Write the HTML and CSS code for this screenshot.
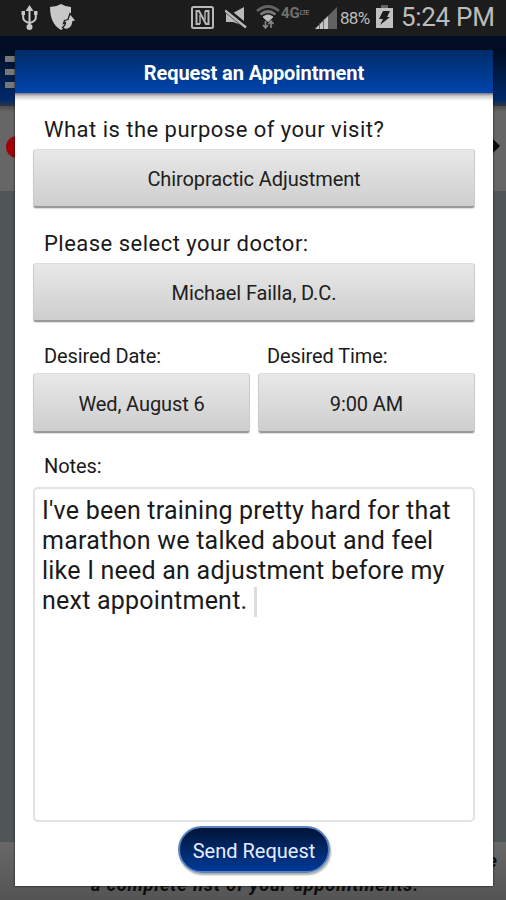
FILE: index.html
```html
<!DOCTYPE html>
<html lang="en">
<head>
  <meta charset="UTF-8">
  <meta name="viewport" content="width=device-width, initial-scale=1.0">
  <title>Request an Appointment</title>
  <link rel="stylesheet" href="styles.css">
</head>
<body>
  <header class="status-bar">
    <div class="status-left">
      <svg class="usb" width="17" height="26" viewBox="0 0 17 26" fill="none" stroke="#c8c8c8" stroke-width="2">
        <path d="M8.5 4v18M2.200 9v4q0 3 6 5M14.800 9v4q0 3-6 5"/>
        <path d="M8.5 0l4 6h-8zM5.500 22a3 3 0 1 0 6 0a3 3 0 1 0-6 0M.5 6h3.500v4H.5zM13 6h3.500v4H13z" fill="#c8c8c8" stroke="none"/>
      </svg>
      <svg class="shield" width="27" height="27" viewBox="0 0 27 27">
        <path d="M0 3q6 0 11-3q5 3 10 3v11l-3 8-7 4Q0 20 0 3z" fill="#c8c8c8"/>
        <path d="M20 9.500l6.500 7.500-3.500.5q-1 8-8 8l-2.500-2q3-2 3-5l-2 1 1-3 3.500-1z" fill="#c8c8c8" stroke="#1c1c1c" stroke-width="1.300"/>
      </svg>
    </div>
    <div class="status-right">
      <svg class="nfc" width="23" height="23" viewBox="0 0 23 23" fill="none" stroke="#b9b9b9">
        <rect x="1" y="1" width="21" height="21" rx="1.500" stroke-width="2"/>
        <path d="M9 18H5.500V5H8l7 13h2.500V5H14" stroke-width="2"/>
        <path d="M9 18V9M14 5v9" stroke-width="1.400"/>
      </svg>
      <svg class="mute" width="23" height="23" viewBox="0 0 23 23">
        <path d="M1 6h7l11-6v19L8 15H1z" fill="#b9b9b9"/>
        <path d="M0 2l22 18" stroke="#1c1c1c" stroke-width="5.500"/>
        <path d="M0 3.500l21 17" stroke="#b9b9b9" stroke-width="2.500"/>
      </svg>
      <svg class="wifi" width="24" height="24" viewBox="0 0 24 24" fill="none" stroke-width="2.800">
        <path d="M1 6q11-9 22 0" stroke="#636363"/>
        <path d="M4.500 9.500q7.500-6 15 0" stroke="#777"/>
        <path d="M7 12q5-4 10 0l-5 4.500z" fill="#c0c0c0" stroke="#c0c0c0" stroke-width="1"/>
        <path d="M9.500 16v7M15 23v-7M7 20l2.500 3 2.500-3M12.500 19l2.500-3 2.500 3" stroke="#888" stroke-width="1.600"/>
      </svg>
      <span class="network">4G<small>LTE</small></span>
      <svg class="signal" width="22" height="22" viewBox="0 0 22 22">
        <path d="M0 22L22 0v22z" fill="#626262"/>
        <path d="M0 22L13 9v13z" fill="#c4c4c4"/>
        <path d="M4.500 22v-6M8.500 22V12" stroke="#555" stroke-width=".8"/>
      </svg>
      <span class="percent">88%</span>
      <svg class="battery" width="17" height="23" viewBox="0 0 17 23">
        <path d="M5 0h7v3H5z" fill="#666"/>
        <path d="M0 3h17v20H0z" fill="#c0c0c0"/>
        <path d="M7 6h7l-3 6h3L4 20l3-6H3z" fill="#1c1c1c"/>
      </svg>
      <span class="clock">5:24 PM</span>
    </div>
  </header>

  <!-- dimmed app screen behind the dialog -->
  <div class="app">
    <div class="app-header">
      <span class="menu-line"></span>
      <span class="menu-line"></span>
      <span class="menu-line"></span>
    </div>
    <div class="app-steps">
      <span class="dot"></span>
      <span class="arrow"></span>
    </div>
    <div class="app-content"></div>
    <div class="app-footer">
      <p class="footer-end">e</p>
      <p class="footer-text">a complete list of your appointments.</p>
    </div>
  </div>

  <main class="dialog">
    <h1>Request an Appointment</h1>
    <form class="request-form">
      <label class="question">What is the purpose of your visit?</label>
      <button type="button" class="picker">Chiropractic Adjustment</button>
      <label class="question doctor">Please select your doctor:</label>
      <button type="button" class="picker">Michael Failla, D.C.</button>
      <div class="row">
        <div class="field">
          <label>Desired Date:</label>
          <button type="button" class="picker">Wed, August 6</button>
        </div>
        <div class="field time">
          <label>Desired Time:</label>
          <button type="button" class="picker">9:00 AM</button>
        </div>
      </div>
      <label class="notes-label">Notes:</label>
      <div class="notes">I've been training pretty hard for that<br>marathon we talked about and feel<br>like I need an adjustment before my<br>next appointment. <span class="cursor"></span></div>
      <button type="button" class="send">Send Request</button>
    </form>
  </main>
</body>
</html>
```

FILE: styles.css
```css
* {
  box-sizing: border-box;
}
body {
  font-family: Roboto, "Liberation Sans", sans-serif;
  margin: 0;
  height: 900px;
  overflow: hidden;
  position: relative;
  display: flex;
  flex-direction: column;
  white-space: nowrap;
}
h1, p {
  margin: 0;
}
.status-bar {
  background: #1c1c1c;
  height: 36px;
  flex: none;
  display: flex;
  justify-content: space-between;
  padding: 0 11px 0 21px;
  color: #bcbcbc;
}
.status-left, .status-right {
  display: flex;
  align-items: flex-start;
}
svg {
  display: block;
  flex: none;
}
.usb {
  margin-top: 5px;
}
.shield {
  margin: 4px 0 0 12px;
}
.nfc {
  margin-top: 6px;
}
.mute {
  margin: 7px 0 0 11px;
}
.wifi {
  margin: 5px 0 0 8px;
}
.network {
  font-size: 15px;
  font-weight: bold;
  line-height: 16px;
  margin: 5px 0 0 1px;
  color: #707070;
  width: 32px;
}
.network small {
  font-size: 7px;
  font-style: italic;
  letter-spacing: -0.8px;
  vertical-align: 3px;
}
.signal {
  margin: 7px 0 0 2px;
}
.percent {
  font-size: 17px;
  line-height: 36px;
  margin-left: 3px;
  width: 32px;
  letter-spacing: -0.7px;
}
.battery {
  margin: 5px 0 0 4px;
}
.clock {
  font-size: 26px;
  line-height: 35px;
  margin-left: 8px;
  width: 94px;
  letter-spacing: -0.3px;
}
.app {
  flex: 1;
  display: flex;
  flex-direction: column;
}
.app-header {
  height: 70px;
  background: linear-gradient(#000d24 15px, #002a6b 64px, #303641);
  padding: 20px 0 0 5px;
  display: flex;
  flex-direction: column;
  gap: 7px;
}
.menu-line {
  width: 22px;
  height: 6px;
  background: #777;
}
.app-steps {
  height: 85px;
  background: linear-gradient(#4c4c4c, #666 6px);
  display: flex;
  justify-content: space-between;
  padding: 30px 6px 0 6px;
}
.dot {
  width: 22px;
  height: 22px;
  border-radius: 50%;
  background: #a00008;
}
.arrow {
  height: 20px;
  border-left: 10px solid #0a0a0a;
  border-top: 10px solid transparent;
  border-bottom: 10px solid transparent;
}
.app-content {
  flex: 1;
  background: #505558;
}
.app-footer {
  height: 58px;
  background: linear-gradient(#686868, #545454);
  font-weight: bold;
  font-style: italic;
  color: #0c0c0c;
  font-size: 18px;
  line-height: 24px;
  padding: 7px 9px 0 11px;
}
.footer-end {
  text-align: right;
}
.footer-text {
  margin-left: 80px;
  letter-spacing: 0.95px;
}
.dialog {
  position: absolute;
  left: 15px;
  top: 50px;
  width: 478px;
  height: 836px;
  background: #fff;
  box-shadow: 0 0 2px #111;
}
.dialog h1 {
  height: 43px;
  background: linear-gradient(#002b68, #0045ae);
  color: #fff;
  font-size: 20px;
  letter-spacing: -0.08px;
  line-height: 46px;
  text-align: center;
}
.request-form {
  display: flex;
  flex-direction: column;
  padding: 22px 18px 0;
  background: linear-gradient(#777, #ccc 3px, #fff 8px);
}
label {
  color: #1a1a1a;
  padding-left: 11px;
  font-size: 20px;
  letter-spacing: -0.1px;
  line-height: 24px;
}
.question {
  font-size: 22px;
  letter-spacing: 0.48px;
  line-height: 29px;
  margin-bottom: 5px;
}
.picker {
  font-family: inherit;
  font-size: 20px;
  letter-spacing: -0.1px;
  color: #202020;
  height: 59px;
  padding: 2px 0 0;
  border: 1px solid #ccc;
  border-top-color: #dedede;
  border-bottom: 2px solid #9a9a9a;
  border-radius: 3px;
  background: linear-gradient(#e8e8e8, #cecece);
  box-shadow: 0 1px 1px #ddd;
}
.doctor {
  margin-top: 21px;
}
.row {
  display: flex;
  gap: 8px;
  margin-top: 22px;
}
.field {
  flex: 1;
  display: flex;
  flex-direction: column;
  gap: 5px;
}
.field .picker {
  height: 60px;
  padding-top: 3px;
}
.time label {
  padding-left: 9px;
}
.notes-label {
  margin-top: 21px;
}
.notes {
  height: 335px;
  margin-top: 9px;
  border: 2px solid #e2e2e2;
  border-radius: 5px;
  padding: 7px;
  font-size: 25px;
  letter-spacing: 0.22px;
  line-height: 30px;
  color: #1a1a1a;
}
.cursor {
  display: inline-block;
  width: 3px;
  height: 30px;
  background: #ddd;
  vertical-align: middle;
}
.send {
  align-self: center;
  width: 152px;
  height: 47px;
  margin: 4px 0 0;
  padding: 2px 0 0;
  border: 2px solid #5b83be;
  border-radius: 24px;
  background: linear-gradient(#001437, #003a98);
  box-shadow: 1px 2px 2px #aaa;
  color: #e8ecff;
  font-family: inherit;
  font-size: 20px;
}
```
